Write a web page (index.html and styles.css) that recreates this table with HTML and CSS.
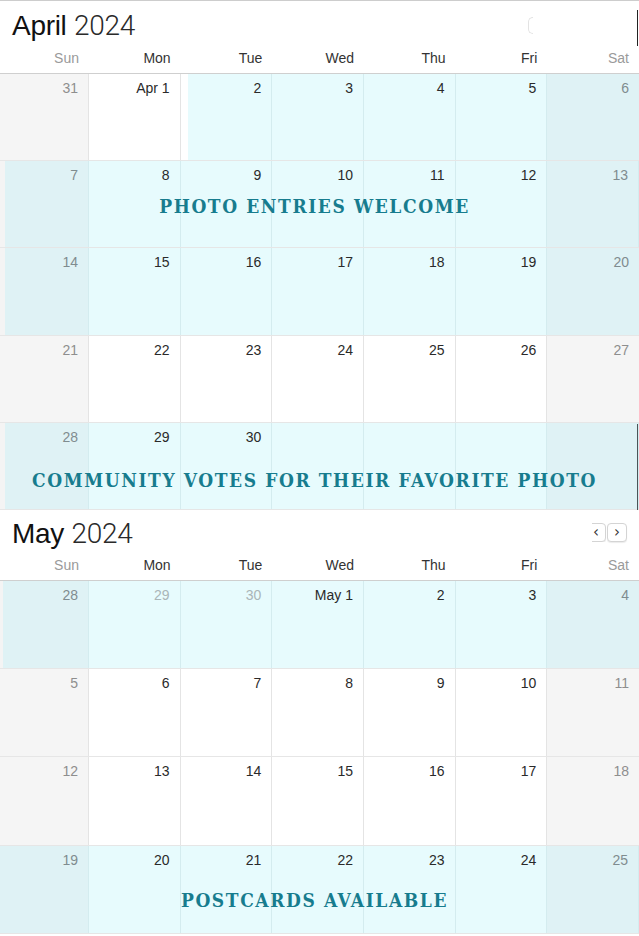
FILE: index.html
```html
<!DOCTYPE html>
<html lang="en">
<head>
<meta charset="utf-8">
<title>Photo Contest Calendar</title>
<link rel="stylesheet" href="styles.css">
</head>
<body>
<div class="page">
  <span class="edge edge--top"></span>
  <span class="edge edge--mid"></span>

  <section class="month month--april">
    <header class="month-head">
      <h2 class="month-title"><span class="m-name">April</span> <span class="m-year">2024</span></h2>
      <div class="nav nav--april"><span class="nav-edge"></span></div>
    </header>
    <div class="weekdays">
      <div class="wd wd--end">Sun</div><div class="wd">Mon</div><div class="wd">Tue</div><div class="wd">Wed</div><div class="wd">Thu</div><div class="wd">Fri</div><div class="wd wd--end">Sat</div>
    </div>
    <div class="weeks">
      <div class="week">
        <div class="day day--end"><span class="num">31</span></div>
        <div class="day"><span class="num">Apr 1</span></div>
        <div class="day day--ev day--start"><span class="num">2</span></div>
        <div class="day day--ev"><span class="num">3</span></div>
        <div class="day day--ev"><span class="num">4</span></div>
        <div class="day day--ev"><span class="num">5</span></div>
        <div class="day day--end day--ev"><span class="num">6</span></div>
      </div>
      <div class="week">
        <div class="day day--end day--ev day--cut"><span class="num">7</span></div>
        <div class="day day--ev"><span class="num">8</span></div>
        <div class="day day--ev"><span class="num">9</span></div>
        <div class="day day--ev"><span class="num">10</span></div>
        <div class="day day--ev"><span class="num">11</span></div>
        <div class="day day--ev"><span class="num">12</span></div>
        <div class="day day--end day--ev"><span class="num">13</span></div>
        <div class="event-label event-label--one">PHOTO ENTRIES WELCOME</div>
      </div>
      <div class="week">
        <div class="day day--end day--ev day--cut"><span class="num">14</span></div>
        <div class="day day--ev"><span class="num">15</span></div>
        <div class="day day--ev"><span class="num">16</span></div>
        <div class="day day--ev"><span class="num">17</span></div>
        <div class="day day--ev"><span class="num">18</span></div>
        <div class="day day--ev"><span class="num">19</span></div>
        <div class="day day--end day--ev"><span class="num">20</span></div>
      </div>
      <div class="week">
        <div class="day day--end"><span class="num">21</span></div>
        <div class="day"><span class="num">22</span></div>
        <div class="day"><span class="num">23</span></div>
        <div class="day"><span class="num">24</span></div>
        <div class="day"><span class="num">25</span></div>
        <div class="day"><span class="num">26</span></div>
        <div class="day day--end"><span class="num">27</span></div>
      </div>
      <div class="week">
        <div class="day day--end day--ev day--cut"><span class="num">28</span></div>
        <div class="day day--ev"><span class="num">29</span></div>
        <div class="day day--ev"><span class="num">30</span></div>
        <div class="day day--ev"></div>
        <div class="day day--ev"></div>
        <div class="day day--ev"></div>
        <div class="day day--end day--ev"></div>
        <div class="event-label event-label--two">COMMUNITY VOTES FOR THEIR FAVORITE PHOTO</div>
      </div>
    </div>
  </section>

  <section class="month month--may">
    <header class="month-head">
      <h2 class="month-title"><span class="m-name">May</span> <span class="m-year">2024</span></h2>
      <div class="nav nav--may">
        <span class="nav-clip"><span class="nav-btn">&#8249;</span></span>
        <span class="nav-btn">&#8250;</span>
      </div>
    </header>
    <div class="weekdays">
      <div class="wd wd--end">Sun</div><div class="wd">Mon</div><div class="wd">Tue</div><div class="wd">Wed</div><div class="wd">Thu</div><div class="wd">Fri</div><div class="wd wd--end">Sat</div>
    </div>
    <div class="weeks">
      <div class="week">
        <div class="day day--end day--ev day--cut-sm"><span class="num num--other">28</span></div>
        <div class="day day--ev"><span class="num num--other">29</span></div>
        <div class="day day--ev"><span class="num num--other">30</span></div>
        <div class="day day--ev"><span class="num">May 1</span></div>
        <div class="day day--ev"><span class="num">2</span></div>
        <div class="day day--ev"><span class="num">3</span></div>
        <div class="day day--end day--ev"><span class="num">4</span></div>
      </div>
      <div class="week">
        <div class="day day--end"><span class="num">5</span></div>
        <div class="day"><span class="num">6</span></div>
        <div class="day"><span class="num">7</span></div>
        <div class="day"><span class="num">8</span></div>
        <div class="day"><span class="num">9</span></div>
        <div class="day"><span class="num">10</span></div>
        <div class="day day--end"><span class="num">11</span></div>
      </div>
      <div class="week">
        <div class="day day--end"><span class="num">12</span></div>
        <div class="day"><span class="num">13</span></div>
        <div class="day"><span class="num">14</span></div>
        <div class="day"><span class="num">15</span></div>
        <div class="day"><span class="num">16</span></div>
        <div class="day"><span class="num">17</span></div>
        <div class="day day--end"><span class="num">18</span></div>
      </div>
      <div class="week">
        <div class="day day--end day--ev"><span class="num">19</span></div>
        <div class="day day--ev"><span class="num">20</span></div>
        <div class="day day--ev"><span class="num">21</span></div>
        <div class="day day--ev"><span class="num">22</span></div>
        <div class="day day--ev"><span class="num">23</span></div>
        <div class="day day--ev"><span class="num">24</span></div>
        <div class="day day--end day--ev"><span class="num">25</span></div>
        <div class="event-label event-label--three">POSTCARDS AVAILABLE</div>
      </div>
    </div>
  </section>
</div>
</body>
</html>
```

FILE: styles.css
```css
* { box-sizing: border-box; }

html, body {
  margin: 0;
  padding: 0;
  background: #ffffff;
}

body {
  font-family: "Liberation Sans", Arial, sans-serif;
  color: #333333;
}

.page {
  position: relative;
  width: 639px;
  overflow: hidden;
}

.edge {
  position: absolute;
  right: 1px;
  width: 1px;
  background: #222222;
  z-index: 3;
}
.edge--top { top: 10px; height: 36px; }
.edge--mid { top: 424px; height: 86px; background: #4a5557; }

.month-head {
  display: flex;
  align-items: flex-start;
  justify-content: space-between;
}

.month--april .month-head {
  border-top: 1px solid #cdcdcd;
  height: 44px;
  padding: 9px 0 0 12px;
}

.month--may .month-head {
  height: 41px;
  padding: 8px 0 0 12px;
}

.month-title {
  margin: 0;
  font-size: 28px;
  line-height: 32px;
  font-weight: 400;
  letter-spacing: -0.3px;
  white-space: nowrap;
}

.m-name {
  color: #111111;
  font-family: "Liberation Sans", Arial, sans-serif;
}

.m-year {
  color: #2a2a2a;
  font-family: Roboto, "Liberation Sans", sans-serif;
  font-weight: 300;
}

.nav {
  display: flex;
  align-items: center;
}

.nav--april {
  margin-top: 7px;
  margin-right: 106px;
}

.nav-edge {
  display: block;
  width: 5px;
  height: 17px;
  border: 1.5px solid #e3e3e3;
  border-right: none;
  border-radius: 6px 0 0 6px;
}

.nav--may {
  margin-top: 5px;
  margin-right: 12px;
}

.nav-clip {
  display: flex;
  justify-content: flex-end;
  width: 14px;
  overflow: hidden;
  margin-right: 1px;
}

.nav-clip .nav-btn { flex-shrink: 0; }

.nav-btn {
  display: flex;
  align-items: center;
  justify-content: center;
  width: 20px;
  height: 19px;
  border: 1px solid #d4d4d4;
  border-radius: 4px;
  background: #ffffff;
  font-family: "DejaVu Sans", sans-serif;
  font-size: 15px;
  line-height: 1;
  color: #333333;
  box-shadow: 0 1px 1px rgba(0, 0, 0, 0.08);
}

.weekdays {
  display: grid;
  grid-template-columns: 89px repeat(6, 1fr);
  height: 30px;
  border-bottom: 1px solid #cfcfcf;
}

.wd {
  font-size: 14px;
  line-height: 29px;
  text-align: right;
  padding-right: 10px;
  color: #333333;
}

.wd--end { color: #9a9a9a; }

.week {
  position: relative;
  display: grid;
  grid-template-columns: 89px repeat(6, 1fr);
  border-bottom: 1px solid #e6e6e6;
}

.month--april .week { height: 87.2px; }
.month--may .week { height: 88.25px; }

.day {
  background: #ffffff;
  border-right: 1px solid #e4e4e4;
  text-align: right;
  padding: 5px 10px 0 0;
}

.day:last-child { border-right: none; }

.day--end { background: #f5f5f5; }

.day--ev {
  background: #e7fbfd;
  border-right-color: #d4ecef;
}

.day--end.day--ev { background: #dff2f5; }

.day--start { box-shadow: inset 7px 0 0 #ffffff; }
.day--cut { box-shadow: inset 5px 0 0 #f4f4f4; }
.day--cut-sm { box-shadow: inset 3px 0 0 #f4f4f4; }

.num {
  font-size: 14px;
  line-height: 16px;
  color: #2a2a2a;
}

.day--end .num { color: #8e8e8e; }
.day--end.day--ev .num { color: #7f8c8f; }
.num--other,
.day--end .num--other { color: #aab5b8; }

.event-label {
  position: absolute;
  left: 0;
  right: 10px;
  text-align: center;
  white-space: nowrap;
  font-family: "DejaVu Serif", "Liberation Serif", serif;
  font-stretch: condensed;
  font-weight: 700;
  font-size: 19px;
  line-height: 20px;
  letter-spacing: 1.6px;
  color: #177c8e;
  pointer-events: none;
}

.event-label--one { top: 35px; }
.event-label--two { top: 47px; }
.event-label--three { top: 44px; }
```
